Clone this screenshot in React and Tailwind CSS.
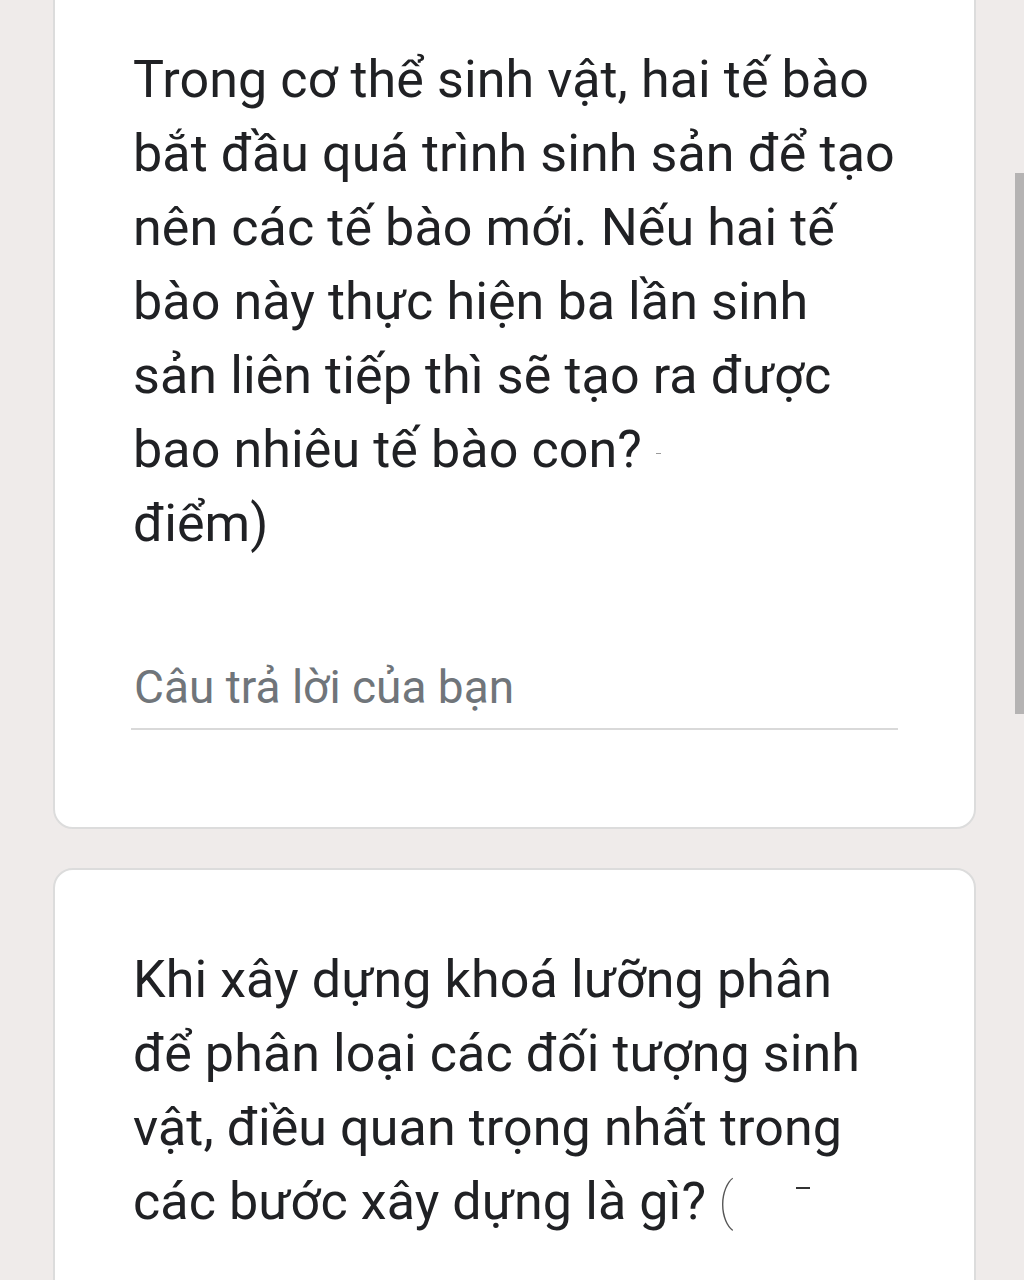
import React from 'react';

const questionOne = [
  'Trong cơ thể sinh vật, hai tế bào',
  'bắt đầu quá trình sinh sản để tạo',
  'nên các tế bào mới. Nếu hai tế',
  'bào này thực hiện ba lần sinh',
  'sản liên tiếp thì sẽ tạo ra được',
];

const questionTwo = [
  'Khi xây dựng khoá lưỡng phân',
  'để phân loại các đối tượng sinh',
  'vật, điều quan trọng nhất trong',
];

const QuestionText = ({ lines, children }) => (
  <div className="text-[52px] leading-[74px] text-[#202124] tracking-[0.1px]">
    {lines.map((line, i) => (
      <div key={i} className="whitespace-nowrap">
        {line}
      </div>
    ))}
    {children}
  </div>
);

const App = () => {
  return (
    <div
      className="relative min-h-[1280px] h-[1280px] overflow-hidden bg-[#efebea]"
      style={{ fontFamily: 'Roboto, "Noto Sans", sans-serif' }}
    >
      <div className="pl-[53px] pr-[48px] flex flex-col gap-[39px]">
        {/* Question card 1 */}
        <div className="-mt-[40px] bg-white border-2 border-[#dcdcdc] rounded-[20px] pt-[81px] pb-[97px] pl-[78px] pr-[76px]">
          <QuestionText lines={questionOne}>
            <div className="whitespace-nowrap">
              bao nhiêu tế bào con?
              <span className="inline-block align-middle ml-[14px] w-[5px] h-[1px] bg-[#9a9a9a]" />
            </div>
            <div className="whitespace-nowrap">điểm)</div>
          </QuestionText>

          <div className="mt-[98px] -ml-[2px] pb-[13px] border-b-2 border-[#d9d9d9]">
            <div className="text-[46px] leading-[56px] text-[#70757a] ml-[3px]">
              Câu trả lời của bạn
            </div>
          </div>
        </div>

        {/* Question card 2 */}
        <div className="bg-white border-2 border-[#dcdcdc] rounded-[20px] pt-[73px] pb-[80px] pl-[78px] pr-[76px]">
          <QuestionText lines={questionTwo}>
            <div className="whitespace-nowrap">
              các bước xây dựng là gì?
              <span className="ml-[12px] text-[#555] font-thin">(</span>
              <span className="inline-block align-top mt-[22px] ml-[62px] w-[14px] h-[2px] bg-[#333]" />
            </div>
          </QuestionText>
        </div>
      </div>

      {/* scrollbar thumb */}
      <div className="absolute right-0 top-[173px] w-[9px] h-[541px] bg-[#b5b3b3]" />
    </div>
  );
};

export default App;
